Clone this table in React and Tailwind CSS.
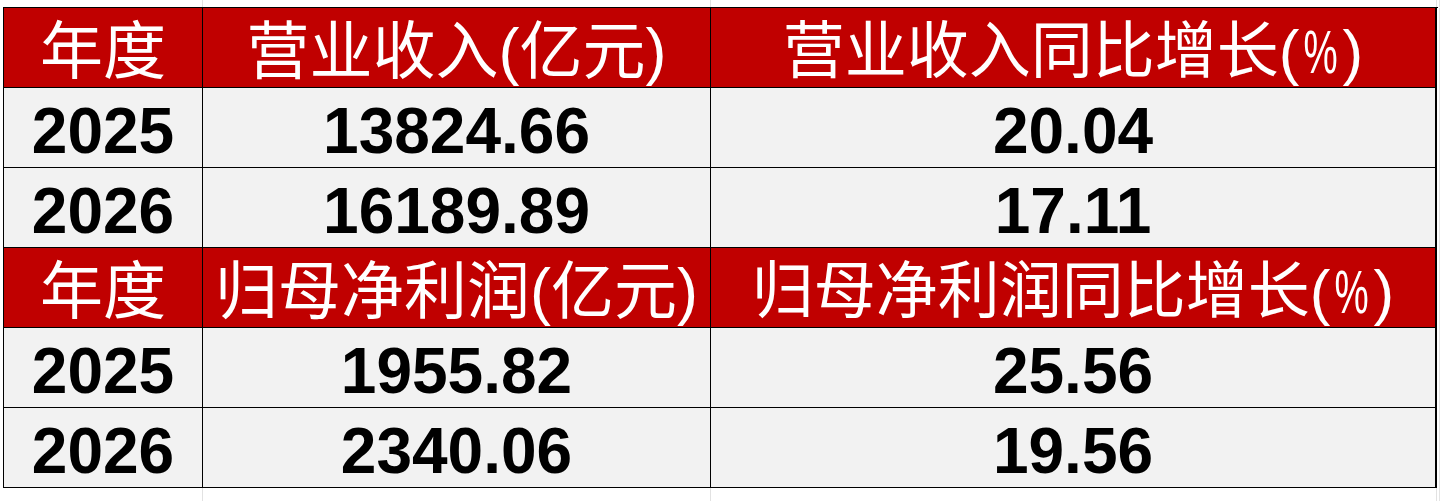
import React from "react";

const FONT = "font-['Liberation_Sans','Noto_Sans_CJK_SC',sans-serif]";

function HeaderRow({ a, b, c }) {
  return (
    <div className="flex h-[80px]">
      <div className="w-[3px] shrink-0" />
      <div className="flex w-[200px] shrink-0 items-center justify-center border-x border-b border-black bg-[#c00000] pt-[8px] text-[63px] leading-none text-white">
        {a}
      </div>
      <div className="flex w-[508px] shrink-0 items-center justify-center border-b border-r border-black bg-[#c00000] pt-[8px] text-[63px] leading-none whitespace-nowrap text-white">
        {b}
      </div>
      <div className="flex w-[726px] shrink-0 items-center justify-center border-b border-r-2 border-black bg-[#c00000] pt-[8px] text-[62px] leading-none whitespace-nowrap text-white">
        {c}
      </div>
      <div className="w-[3px] shrink-0 border-r border-[#e4e4e4]" />
    </div>
  );
}

function DataRow({ a, b, c }) {
  return (
    <div className="flex h-[80px]">
      <div className="w-[3px] shrink-0" />
      <div className="flex w-[200px] shrink-0 items-center justify-center border-x border-b border-black bg-[#f2f2f2] pt-[6px] text-[64px] font-bold leading-none text-black">
        {a}
      </div>
      <div className="flex w-[508px] shrink-0 items-center justify-center border-b border-r border-black bg-[#f2f2f2] pt-[6px] text-[64px] font-bold leading-none text-black">
        {b}
      </div>
      <div className="flex w-[726px] shrink-0 items-center justify-center border-b border-r-2 border-black bg-[#f2f2f2] pt-[6px] text-[64px] font-bold leading-none text-black">
        {c}
      </div>
      <div className="w-[3px] shrink-0 border-r border-[#e4e4e4]" />
    </div>
  );
}

function Strip({ h }) {
  return (
    <div className={`flex ${h}`}>
      <div className="w-[3px] shrink-0" />
      <div className="w-[200px] shrink-0 border-r border-[#e2e2e2]" />
      <div className="w-[508px] shrink-0 border-r border-[#e2e2e2]" />
      <div className="w-[726px] shrink-0 border-r border-[#e2e2e2]" />
      <div className="w-[3px] shrink-0 border-r border-[#e4e4e4]" />
    </div>
  );
}

const Pct = () => (
  <span className="inline-block">
    (<span className="inline-block scale-x-[0.62] -mx-[6px]">%</span>)
  </span>
);

export default function App() {
  return (
    <div className={`h-[501px] w-[1443px] overflow-hidden bg-white ${FONT}`}>
      <div className="h-[7px]">
        <Strip h="h-[7px]" />
      </div>
      <div className="border-t border-black ml-[3px] w-[1435px]" />
      <HeaderRow a="年度" b="营业收入(亿元)" c={<>营业收入同比增长<Pct /></>} />
      <DataRow a="2025" b="13824.66" c="20.04" />
      <DataRow a="2026" b="16189.89" c="17.11" />
      <HeaderRow a="年度" b="归母净利润(亿元)" c={<>归母净利润同比增长<Pct /></>} />
      <DataRow a="2025" b="1955.82" c="25.56" />
      <DataRow a="2026" b="2340.06" c="19.56" />
      <Strip h="h-[20px]" />
    </div>
  );
}
